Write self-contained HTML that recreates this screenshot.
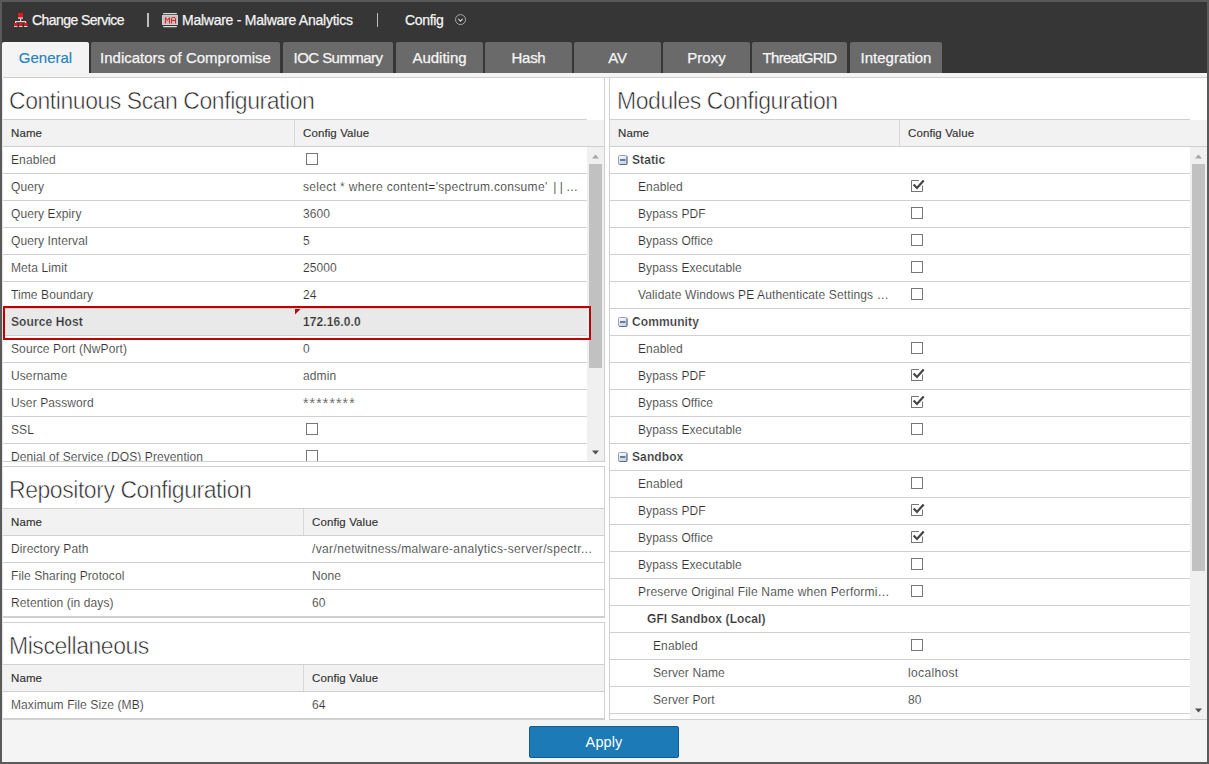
<!DOCTYPE html>
<html><head><meta charset="utf-8"><style>
html,body{margin:0;padding:0;}
body{width:1209px;height:764px;position:relative;overflow:hidden;background:#5a5a5a;font-family:"Liberation Sans",sans-serif;color:#333;}
div{position:absolute;box-sizing:border-box;}
.t{white-space:nowrap;font-size:12px;letter-spacing:0.1px;}
.n{-webkit-text-stroke:0.15px #fff;}
.bd{font-weight:bold;-webkit-text-stroke:0.2px #fff;}
svg{display:block;}
</style></head><body>
<div style="left:2px;top:2px;width:1205px;height:760px;background:#fff"></div>
<div style="left:2px;top:2px;width:1205px;height:71px;background:#363636"></div>
<div style="left:13px;top:12px;width:16px;height:16px"><svg width="16" height="16" viewBox="0 0 16 16"><rect x="5" y="1" width="5" height="5" fill="#e8141c"/><rect x="5" y="5.5" width="5" height="1.2" fill="#e0e0e0"/><rect x="7" y="6.5" width="1.2" height="3" fill="#d8d8d8"/><rect x="2" y="9" width="11" height="1.2" fill="#d8d8d8"/><rect x="2" y="9" width="1.2" height="2" fill="#d8d8d8"/><rect x="12" y="9" width="1.2" height="2" fill="#d8d8d8"/><rect x="1" y="11" width="3.5" height="3" fill="#e8141c"/><rect x="6" y="11" width="3.5" height="3" fill="#e8141c"/><rect x="11" y="11" width="3.5" height="3" fill="#e8141c"/><rect x="1" y="14" width="3.5" height="1" fill="#cfcfcf"/><rect x="6" y="14" width="3.5" height="1" fill="#cfcfcf"/><rect x="11" y="14" width="3.5" height="1" fill="#cfcfcf"/></svg></div>
<div class="t " style="left:32px;top:10px;height:21px;line-height:21px;font-size:14px;letter-spacing:-0.55px;color:#f4f4f4;-webkit-text-stroke:0.25px #f4f4f4;">Change Service</div>
<div style="left:147px;top:13px;width:2px;height:14px;background:#bdbdbd"></div>
<div style="left:161px;top:12px;width:18px;height:16px"><svg width="18" height="16" viewBox="0 0 18 16"><rect x="2" y="1" width="14" height="1.2" rx="0.6" fill="#dcdcdc"/><rect x="1" y="3" width="16" height="10" fill="#cfcfcf"/><rect x="2" y="4" width="14" height="8" fill="#c0c0c0"/><path d="M4.5 11.5 V5.5 M4.5 5.5 L6.5 8.5 L8.5 5.5 M8.5 5.5 V11.5 M10.5 11.5 V6.5 Q10.5 5.5 12.5 5.5 Q14.5 5.5 14.5 6.5 V11.5 M10.5 8.5 H14.5" fill="none" stroke="#ee1a22" stroke-width="1"/><rect x="2" y="14" width="14" height="1.2" rx="0.6" fill="#dcdcdc"/></svg></div>
<div class="t " style="left:182px;top:10px;height:21px;line-height:21px;font-size:14px;letter-spacing:-0.25px;color:#f4f4f4;-webkit-text-stroke:0.25px #f4f4f4;">Malware - Malware Analytics</div>
<div style="left:376.5px;top:13px;width:1.5px;height:14px;background:#bdbdbd"></div>
<div class="t " style="left:405px;top:10px;height:21px;line-height:21px;font-size:14px;letter-spacing:-0.35px;color:#f4f4f4;-webkit-text-stroke:0.25px #f4f4f4;">Config</div>
<div style="left:454px;top:13px;width:13px;height:13px"><svg width="13" height="13" viewBox="0 0 13 13"><circle cx="6.5" cy="6.6" r="5" fill="none" stroke="#a8a8a8" stroke-width="1"/><path d="M4.3 5.9 L6.5 8.1 L8.7 5.9" fill="none" stroke="#d4d4d4" stroke-width="1.1"/></svg></div>
<div style="left:2px;top:42px;width:87px;height:35px;background:#f4f4f4;border-radius:2px 2px 0 0"></div>
<div class="t" style="left:2px;top:42px;width:87px;height:31px;line-height:31px;text-align:center;font-size:15px;letter-spacing:0px;color:#1d82bd;-webkit-text-stroke:0.15px #1d82bd">General</div>
<div style="left:91px;top:42px;width:189px;height:31px;background:#6a6a6a;border-radius:2px 2px 0 0"></div>
<div class="t" style="left:91px;top:42px;width:189px;height:31px;line-height:31px;text-align:center;font-size:15px;letter-spacing:0px;color:#f6f6f6;-webkit-text-stroke:0.25px #f6f6f6">Indicators of Compromise</div>
<div style="left:283px;top:42px;width:110px;height:31px;background:#6a6a6a;border-radius:2px 2px 0 0"></div>
<div class="t" style="left:283px;top:42px;width:110px;height:31px;line-height:31px;text-align:center;font-size:15px;letter-spacing:-0.55px;color:#f6f6f6;-webkit-text-stroke:0.25px #f6f6f6">IOC Summary</div>
<div style="left:396px;top:42px;width:87px;height:31px;background:#6a6a6a;border-radius:2px 2px 0 0"></div>
<div class="t" style="left:396px;top:42px;width:87px;height:31px;line-height:31px;text-align:center;font-size:15px;letter-spacing:0px;color:#f6f6f6;-webkit-text-stroke:0.25px #f6f6f6">Auditing</div>
<div style="left:485px;top:42px;width:87px;height:31px;background:#6a6a6a;border-radius:2px 2px 0 0"></div>
<div class="t" style="left:485px;top:42px;width:87px;height:31px;line-height:31px;text-align:center;font-size:15px;letter-spacing:-0.3px;color:#f6f6f6;-webkit-text-stroke:0.25px #f6f6f6">Hash</div>
<div style="left:574px;top:42px;width:87px;height:31px;background:#6a6a6a;border-radius:2px 2px 0 0"></div>
<div class="t" style="left:574px;top:42px;width:87px;height:31px;line-height:31px;text-align:center;font-size:15px;letter-spacing:-0.3px;color:#f6f6f6;-webkit-text-stroke:0.25px #f6f6f6">AV</div>
<div style="left:663px;top:42px;width:87px;height:31px;background:#6a6a6a;border-radius:2px 2px 0 0"></div>
<div class="t" style="left:663px;top:42px;width:87px;height:31px;line-height:31px;text-align:center;font-size:15px;letter-spacing:0px;color:#f6f6f6;-webkit-text-stroke:0.25px #f6f6f6">Proxy</div>
<div style="left:752px;top:42px;width:95px;height:31px;background:#6a6a6a;border-radius:2px 2px 0 0"></div>
<div class="t" style="left:752px;top:42px;width:95px;height:31px;line-height:31px;text-align:center;font-size:15px;letter-spacing:-0.7px;color:#f6f6f6;-webkit-text-stroke:0.25px #f6f6f6">ThreatGRID</div>
<div style="left:850px;top:42px;width:92px;height:31px;background:#6a6a6a;border-radius:2px 2px 0 0"></div>
<div class="t" style="left:850px;top:42px;width:92px;height:31px;line-height:31px;text-align:center;font-size:15px;letter-spacing:0px;color:#f6f6f6;-webkit-text-stroke:0.25px #f6f6f6">Integration</div>
<div style="left:2px;top:73px;width:1205px;height:4px;background:#f4f4f4"></div>
<div style="left:3px;top:77px;width:1204px;height:1px;background:#cfcfcf"></div>
<div style="left:2px;top:78px;width:1px;height:684px;background:#e6e6e6"></div>
<div style="left:604px;top:78px;width:1px;height:384px;background:#d0d0d0"></div>
<div class="t " style="left:9px;top:87px;height:28px;line-height:28px;font-size:23px;letter-spacing:-0.45px;color:#262626;-webkit-text-stroke:0.55px #fff;">Continuous Scan Configuration</div>
<div style="left:3px;top:119px;width:584px;height:1px;background:#d0d0d0"></div>
<div style="left:3px;top:120px;width:601px;height:26px;background:#f2f2f2"></div>
<div style="left:3px;top:146px;width:601px;height:1px;background:#d0d0d0"></div>
<div style="left:294px;top:120px;width:1px;height:26px;background:#d8d8d8"></div>
<div class="t " style="left:11px;top:120px;height:26px;line-height:26px;font-size:11.5px;letter-spacing:0.1px;color:#333;-webkit-text-stroke:0.15px #333;">Name</div>
<div class="t " style="left:303px;top:120px;height:26px;line-height:26px;font-size:11.5px;letter-spacing:0.1px;color:#333;-webkit-text-stroke:0.15px #333;">Config Value</div>
<div style="left:3px;top:147px;width:584px;height:314px;overflow:hidden">
<div style="left:0px;top:26px;width:584px;height:1px;background:#d0d0d0"></div>
<div class="t n" style="left:8px;top:0px;height:26px;line-height:26px;">Enabled</div>
<div style="left:303px;top:6px;width:16px;height:14px"><svg width="14" height="14" viewBox="0 0 14 14"><rect x="0.5" y="0.5" width="11" height="11" fill="#fff" stroke="#777" stroke-width="1"/></svg></div>
<div style="left:0px;top:53px;width:584px;height:1px;background:#d0d0d0"></div>
<div class="t n" style="left:8px;top:27px;height:26px;line-height:26px;">Query</div>
<div class="t n" style="left:300px;top:27px;height:26px;line-height:26px;letter-spacing:0.33px;">select * where content=&#39;spectrum.consume&#39;<span style='letter-spacing:2.3px'> </span><span style='letter-spacing:3.4px'>|</span>|<span style='letter-spacing:-0.5px'> </span>&#8230;</div>
<div style="left:0px;top:80px;width:584px;height:1px;background:#d0d0d0"></div>
<div class="t n" style="left:8px;top:54px;height:26px;line-height:26px;">Query Expiry</div>
<div class="t n" style="left:300px;top:54px;height:26px;line-height:26px;">3600</div>
<div style="left:0px;top:107px;width:584px;height:1px;background:#d0d0d0"></div>
<div class="t n" style="left:8px;top:81px;height:26px;line-height:26px;">Query Interval</div>
<div class="t n" style="left:300px;top:81px;height:26px;line-height:26px;">5</div>
<div style="left:0px;top:134px;width:584px;height:1px;background:#d0d0d0"></div>
<div class="t n" style="left:8px;top:108px;height:26px;line-height:26px;">Meta Limit</div>
<div class="t n" style="left:300px;top:108px;height:26px;line-height:26px;">25000</div>
<div style="left:0px;top:161px;width:584px;height:1px;background:#d0d0d0"></div>
<div class="t n" style="left:8px;top:135px;height:26px;line-height:26px;">Time Boundary</div>
<div class="t n" style="left:300px;top:135px;height:26px;line-height:26px;">24</div>
<div style="left:0px;top:162px;width:584px;height:26px;background:#e9e9e9"></div>
<div style="left:0px;top:188px;width:584px;height:1px;background:#d0d0d0"></div>
<div class="t " style="left:8px;top:162px;height:26px;line-height:26px;font-weight:bold;-webkit-text-stroke:0.2px #e9e9e9;">Source Host</div>
<div class="t " style="left:300px;top:162px;height:26px;line-height:26px;font-weight:bold;-webkit-text-stroke:0.2px #e9e9e9;">172.16.0.0</div>
<div style="left:0px;top:215px;width:584px;height:1px;background:#d0d0d0"></div>
<div class="t n" style="left:8px;top:189px;height:26px;line-height:26px;">Source Port (NwPort)</div>
<div class="t n" style="left:300px;top:189px;height:26px;line-height:26px;">0</div>
<div style="left:0px;top:242px;width:584px;height:1px;background:#d0d0d0"></div>
<div class="t n" style="left:8px;top:216px;height:26px;line-height:26px;">Username</div>
<div class="t n" style="left:300px;top:216px;height:26px;line-height:26px;">admin</div>
<div style="left:0px;top:269px;width:584px;height:1px;background:#d0d0d0"></div>
<div class="t n" style="left:8px;top:243px;height:26px;line-height:26px;">User Password</div>
<div class="t n" style="left:300px;top:243px;height:26px;line-height:26px;font-size:14px;letter-spacing:1.15px;">********</div>
<div style="left:0px;top:296px;width:584px;height:1px;background:#d0d0d0"></div>
<div class="t n" style="left:8px;top:270px;height:26px;line-height:26px;">SSL</div>
<div style="left:303px;top:276px;width:16px;height:14px"><svg width="14" height="14" viewBox="0 0 14 14"><rect x="0.5" y="0.5" width="11" height="11" fill="#fff" stroke="#777" stroke-width="1"/></svg></div>
<div style="left:0px;top:323px;width:584px;height:1px;background:#d0d0d0"></div>
<div class="t n" style="left:8px;top:297px;height:26px;line-height:26px;">Denial of Service (DOS) Prevention</div>
<div style="left:303px;top:303px;width:16px;height:14px"><svg width="14" height="14" viewBox="0 0 14 14"><rect x="0.5" y="0.5" width="11" height="11" fill="#fff" stroke="#777" stroke-width="1"/></svg></div>
</div>
<div style="left:3px;top:461px;width:602px;height:1px;background:#d0d0d0"></div>
<div style="left:587px;top:147px;width:17px;height:314px;background:#f0f0f0"></div>
<div style="left:589px;top:164px;width:13px;height:204px;background:#c1c1c1"></div>
<div style="left:592px;top:154px;width:8px;height:5px"><svg width="8" height="5" viewBox="0 0 8 5"><path d="M0 4.5 L3.5 0.5 L7 4.5Z" fill="#a6a6a6"/></svg></div>
<div style="left:592px;top:450px;width:8px;height:5px"><svg width="8" height="5" viewBox="0 0 8 5"><path d="M0 0.5 L7 0.5 L3.5 4.5Z" fill="#505050"/></svg></div>
<div style="left:3px;top:466px;width:602px;height:1px;background:#d0d0d0"></div>
<div style="left:604px;top:466px;width:1px;height:152px;background:#d0d0d0"></div>
<div class="t " style="left:9px;top:476px;height:28px;line-height:28px;font-size:23px;letter-spacing:-0.45px;color:#262626;-webkit-text-stroke:0.55px #fff;">Repository Configuration</div>
<div style="left:3px;top:508px;width:601px;height:1px;background:#d0d0d0"></div>
<div style="left:3px;top:509px;width:601px;height:26px;background:#f2f2f2"></div>
<div style="left:3px;top:535px;width:601px;height:1px;background:#d0d0d0"></div>
<div style="left:303px;top:509px;width:1px;height:26px;background:#d8d8d8"></div>
<div class="t " style="left:11px;top:509px;height:26px;line-height:26px;font-size:11.5px;letter-spacing:0.1px;color:#333;-webkit-text-stroke:0.15px #333;">Name</div>
<div class="t " style="left:312px;top:509px;height:26px;line-height:26px;font-size:11.5px;letter-spacing:0.1px;color:#333;-webkit-text-stroke:0.15px #333;">Config Value</div>
<div style="left:3px;top:562px;width:601px;height:1px;background:#d0d0d0"></div>
<div class="t n" style="left:11px;top:536px;height:26px;line-height:26px;">Directory Path</div>
<div class="t n" style="left:312px;top:536px;height:26px;line-height:26px;letter-spacing:0.36px;">/var/netwitness/malware-analytics-server/spectr...</div>
<div style="left:3px;top:589px;width:601px;height:1px;background:#d0d0d0"></div>
<div class="t n" style="left:11px;top:563px;height:26px;line-height:26px;">File Sharing Protocol</div>
<div class="t n" style="left:312px;top:563px;height:26px;line-height:26px;">None</div>
<div class="t n" style="left:11px;top:590px;height:26px;line-height:26px;">Retention (in days)</div>
<div class="t n" style="left:312px;top:590px;height:26px;line-height:26px;">60</div>
<div style="left:3px;top:616px;width:602px;height:2px;background:#d0d0d0"></div>
<div style="left:3px;top:622px;width:602px;height:1px;background:#d0d0d0"></div>
<div style="left:604px;top:622px;width:1px;height:98px;background:#d0d0d0"></div>
<div class="t " style="left:9px;top:632px;height:28px;line-height:28px;font-size:23px;letter-spacing:-0.45px;color:#262626;-webkit-text-stroke:0.55px #fff;">Miscellaneous</div>
<div style="left:3px;top:664px;width:601px;height:1px;background:#d0d0d0"></div>
<div style="left:3px;top:665px;width:601px;height:26px;background:#f2f2f2"></div>
<div style="left:3px;top:691px;width:601px;height:1px;background:#d0d0d0"></div>
<div style="left:303px;top:665px;width:1px;height:26px;background:#d8d8d8"></div>
<div class="t " style="left:11px;top:665px;height:26px;line-height:26px;font-size:11.5px;letter-spacing:0.1px;color:#333;-webkit-text-stroke:0.15px #333;">Name</div>
<div class="t " style="left:312px;top:665px;height:26px;line-height:26px;font-size:11.5px;letter-spacing:0.1px;color:#333;-webkit-text-stroke:0.15px #333;">Config Value</div>
<div class="t n" style="left:11px;top:692px;height:26px;line-height:26px;">Maximum File Size (MB)</div>
<div class="t n" style="left:312px;top:692px;height:26px;line-height:26px;">64</div>
<div style="left:609px;top:78px;width:1px;height:642px;background:#d0d0d0"></div>
<div class="t " style="left:617px;top:87px;height:28px;line-height:28px;font-size:23px;letter-spacing:-0.45px;color:#262626;-webkit-text-stroke:0.55px #fff;">Modules Configuration</div>
<div style="left:610px;top:119px;width:580px;height:1px;background:#d0d0d0"></div>
<div style="left:610px;top:120px;width:597px;height:26px;background:#f2f2f2"></div>
<div style="left:610px;top:146px;width:597px;height:1px;background:#d0d0d0"></div>
<div style="left:899px;top:120px;width:1px;height:26px;background:#d8d8d8"></div>
<div class="t " style="left:618px;top:120px;height:26px;line-height:26px;font-size:11.5px;letter-spacing:0.1px;color:#333;-webkit-text-stroke:0.15px #333;">Name</div>
<div class="t " style="left:908px;top:120px;height:26px;line-height:26px;font-size:11.5px;letter-spacing:0.1px;color:#333;-webkit-text-stroke:0.15px #333;">Config Value</div>
<div style="left:610px;top:147px;width:580px;height:572px;overflow:hidden">
<div style="left:0px;top:26px;width:580px;height:1px;background:#d0d0d0"></div>
<div style="left:8px;top:8px;width:10px;height:10px"><svg width="10" height="10" viewBox="0 0 10 10"><defs><linearGradient id="cg" x1="0" y1="0" x2="0.4" y2="1"><stop offset="0" stop-color="#ffffff"/><stop offset="1" stop-color="#c8d3e6"/></linearGradient></defs><rect x="0.5" y="0.5" width="8.5" height="9" rx="1.3" fill="url(#cg)" stroke="#93a1bb" stroke-width="1"/><path d="M9 1.5 V8.5 Q9 9.5 8 9.5 H1.5" fill="none" stroke="#5d6c88" stroke-width="1"/><rect x="2" y="4" width="5.5" height="2" fill="#6c7b96"/></svg></div>
<div class="t bd" style="left:22px;top:0px;height:26px;line-height:26px;">Static</div>
<div style="left:0px;top:53px;width:580px;height:1px;background:#d0d0d0"></div>
<div class="t n" style="left:28px;top:27px;height:26px;line-height:26px;">Enabled</div>
<div style="left:301px;top:33px;width:16px;height:14px"><svg width="16" height="14" viewBox="0 0 16 14"><path d="M0.5 12 V0.5 H8 M11.5 5.5 V11.5 H0.5" fill="none" stroke="#777" stroke-width="1"/><path d="M2.6 4.4 L6 7.9 L12.7 0.4" fill="none" stroke="#454545" stroke-width="2.2"/></svg></div>
<div style="left:0px;top:80px;width:580px;height:1px;background:#d0d0d0"></div>
<div class="t n" style="left:28px;top:54px;height:26px;line-height:26px;">Bypass PDF</div>
<div style="left:301px;top:60px;width:16px;height:14px"><svg width="14" height="14" viewBox="0 0 14 14"><rect x="0.5" y="0.5" width="11" height="11" fill="#fff" stroke="#777" stroke-width="1"/></svg></div>
<div style="left:0px;top:107px;width:580px;height:1px;background:#d0d0d0"></div>
<div class="t n" style="left:28px;top:81px;height:26px;line-height:26px;">Bypass Office</div>
<div style="left:301px;top:87px;width:16px;height:14px"><svg width="14" height="14" viewBox="0 0 14 14"><rect x="0.5" y="0.5" width="11" height="11" fill="#fff" stroke="#777" stroke-width="1"/></svg></div>
<div style="left:0px;top:134px;width:580px;height:1px;background:#d0d0d0"></div>
<div class="t n" style="left:28px;top:108px;height:26px;line-height:26px;">Bypass Executable</div>
<div style="left:301px;top:114px;width:16px;height:14px"><svg width="14" height="14" viewBox="0 0 14 14"><rect x="0.5" y="0.5" width="11" height="11" fill="#fff" stroke="#777" stroke-width="1"/></svg></div>
<div style="left:0px;top:161px;width:580px;height:1px;background:#d0d0d0"></div>
<div class="t n" style="left:28px;top:135px;height:26px;line-height:26px;letter-spacing:0.13px;">Validate Windows PE Authenticate Settings &#8230;</div>
<div style="left:301px;top:141px;width:16px;height:14px"><svg width="14" height="14" viewBox="0 0 14 14"><rect x="0.5" y="0.5" width="11" height="11" fill="#fff" stroke="#777" stroke-width="1"/></svg></div>
<div style="left:0px;top:188px;width:580px;height:1px;background:#d0d0d0"></div>
<div style="left:8px;top:170px;width:10px;height:10px"><svg width="10" height="10" viewBox="0 0 10 10"><defs><linearGradient id="cg" x1="0" y1="0" x2="0.4" y2="1"><stop offset="0" stop-color="#ffffff"/><stop offset="1" stop-color="#c8d3e6"/></linearGradient></defs><rect x="0.5" y="0.5" width="8.5" height="9" rx="1.3" fill="url(#cg)" stroke="#93a1bb" stroke-width="1"/><path d="M9 1.5 V8.5 Q9 9.5 8 9.5 H1.5" fill="none" stroke="#5d6c88" stroke-width="1"/><rect x="2" y="4" width="5.5" height="2" fill="#6c7b96"/></svg></div>
<div class="t bd" style="left:22px;top:162px;height:26px;line-height:26px;">Community</div>
<div style="left:0px;top:215px;width:580px;height:1px;background:#d0d0d0"></div>
<div class="t n" style="left:28px;top:189px;height:26px;line-height:26px;">Enabled</div>
<div style="left:301px;top:195px;width:16px;height:14px"><svg width="14" height="14" viewBox="0 0 14 14"><rect x="0.5" y="0.5" width="11" height="11" fill="#fff" stroke="#777" stroke-width="1"/></svg></div>
<div style="left:0px;top:242px;width:580px;height:1px;background:#d0d0d0"></div>
<div class="t n" style="left:28px;top:216px;height:26px;line-height:26px;">Bypass PDF</div>
<div style="left:301px;top:222px;width:16px;height:14px"><svg width="16" height="14" viewBox="0 0 16 14"><path d="M0.5 12 V0.5 H8 M11.5 5.5 V11.5 H0.5" fill="none" stroke="#777" stroke-width="1"/><path d="M2.6 4.4 L6 7.9 L12.7 0.4" fill="none" stroke="#454545" stroke-width="2.2"/></svg></div>
<div style="left:0px;top:269px;width:580px;height:1px;background:#d0d0d0"></div>
<div class="t n" style="left:28px;top:243px;height:26px;line-height:26px;">Bypass Office</div>
<div style="left:301px;top:249px;width:16px;height:14px"><svg width="16" height="14" viewBox="0 0 16 14"><path d="M0.5 12 V0.5 H8 M11.5 5.5 V11.5 H0.5" fill="none" stroke="#777" stroke-width="1"/><path d="M2.6 4.4 L6 7.9 L12.7 0.4" fill="none" stroke="#454545" stroke-width="2.2"/></svg></div>
<div style="left:0px;top:296px;width:580px;height:1px;background:#d0d0d0"></div>
<div class="t n" style="left:28px;top:270px;height:26px;line-height:26px;">Bypass Executable</div>
<div style="left:301px;top:276px;width:16px;height:14px"><svg width="14" height="14" viewBox="0 0 14 14"><rect x="0.5" y="0.5" width="11" height="11" fill="#fff" stroke="#777" stroke-width="1"/></svg></div>
<div style="left:0px;top:323px;width:580px;height:1px;background:#d0d0d0"></div>
<div style="left:8px;top:305px;width:10px;height:10px"><svg width="10" height="10" viewBox="0 0 10 10"><defs><linearGradient id="cg" x1="0" y1="0" x2="0.4" y2="1"><stop offset="0" stop-color="#ffffff"/><stop offset="1" stop-color="#c8d3e6"/></linearGradient></defs><rect x="0.5" y="0.5" width="8.5" height="9" rx="1.3" fill="url(#cg)" stroke="#93a1bb" stroke-width="1"/><path d="M9 1.5 V8.5 Q9 9.5 8 9.5 H1.5" fill="none" stroke="#5d6c88" stroke-width="1"/><rect x="2" y="4" width="5.5" height="2" fill="#6c7b96"/></svg></div>
<div class="t bd" style="left:22px;top:297px;height:26px;line-height:26px;">Sandbox</div>
<div style="left:0px;top:350px;width:580px;height:1px;background:#d0d0d0"></div>
<div class="t n" style="left:28px;top:324px;height:26px;line-height:26px;">Enabled</div>
<div style="left:301px;top:330px;width:16px;height:14px"><svg width="14" height="14" viewBox="0 0 14 14"><rect x="0.5" y="0.5" width="11" height="11" fill="#fff" stroke="#777" stroke-width="1"/></svg></div>
<div style="left:0px;top:377px;width:580px;height:1px;background:#d0d0d0"></div>
<div class="t n" style="left:28px;top:351px;height:26px;line-height:26px;">Bypass PDF</div>
<div style="left:301px;top:357px;width:16px;height:14px"><svg width="16" height="14" viewBox="0 0 16 14"><path d="M0.5 12 V0.5 H8 M11.5 5.5 V11.5 H0.5" fill="none" stroke="#777" stroke-width="1"/><path d="M2.6 4.4 L6 7.9 L12.7 0.4" fill="none" stroke="#454545" stroke-width="2.2"/></svg></div>
<div style="left:0px;top:404px;width:580px;height:1px;background:#d0d0d0"></div>
<div class="t n" style="left:28px;top:378px;height:26px;line-height:26px;">Bypass Office</div>
<div style="left:301px;top:384px;width:16px;height:14px"><svg width="16" height="14" viewBox="0 0 16 14"><path d="M0.5 12 V0.5 H8 M11.5 5.5 V11.5 H0.5" fill="none" stroke="#777" stroke-width="1"/><path d="M2.6 4.4 L6 7.9 L12.7 0.4" fill="none" stroke="#454545" stroke-width="2.2"/></svg></div>
<div style="left:0px;top:431px;width:580px;height:1px;background:#d0d0d0"></div>
<div class="t n" style="left:28px;top:405px;height:26px;line-height:26px;">Bypass Executable</div>
<div style="left:301px;top:411px;width:16px;height:14px"><svg width="14" height="14" viewBox="0 0 14 14"><rect x="0.5" y="0.5" width="11" height="11" fill="#fff" stroke="#777" stroke-width="1"/></svg></div>
<div style="left:0px;top:458px;width:580px;height:1px;background:#d0d0d0"></div>
<div class="t n" style="left:28px;top:432px;height:26px;line-height:26px;letter-spacing:0.2px;">Preserve Original File Name when Performi&#8230;</div>
<div style="left:301px;top:438px;width:16px;height:14px"><svg width="14" height="14" viewBox="0 0 14 14"><rect x="0.5" y="0.5" width="11" height="11" fill="#fff" stroke="#777" stroke-width="1"/></svg></div>
<div style="left:0px;top:485px;width:580px;height:1px;background:#d0d0d0"></div>
<div class="t bd" style="left:37px;top:459px;height:26px;line-height:26px;">GFI Sandbox (Local)</div>
<div style="left:0px;top:512px;width:580px;height:1px;background:#d0d0d0"></div>
<div class="t n" style="left:43px;top:486px;height:26px;line-height:26px;">Enabled</div>
<div style="left:301px;top:492px;width:16px;height:14px"><svg width="14" height="14" viewBox="0 0 14 14"><rect x="0.5" y="0.5" width="11" height="11" fill="#fff" stroke="#777" stroke-width="1"/></svg></div>
<div style="left:0px;top:539px;width:580px;height:1px;background:#d0d0d0"></div>
<div class="t n" style="left:43px;top:513px;height:26px;line-height:26px;">Server Name</div>
<div class="t n" style="left:298px;top:513px;height:26px;line-height:26px;letter-spacing:0.35px;">localhost</div>
<div style="left:0px;top:566px;width:580px;height:1px;background:#d0d0d0"></div>
<div class="t n" style="left:43px;top:540px;height:26px;line-height:26px;">Server Port</div>
<div class="t n" style="left:298px;top:540px;height:26px;line-height:26px;">80</div>
<div style="left:0px;top:593px;width:580px;height:1px;background:#d0d0d0"></div>
<div class="t n" style="left:43px;top:567px;height:26px;line-height:26px;"></div>
</div>
<div style="left:1190px;top:147px;width:17px;height:572px;background:#f0f0f0"></div>
<div style="left:1192px;top:164px;width:13px;height:407px;background:#c1c1c1"></div>
<div style="left:1195px;top:154px;width:8px;height:5px"><svg width="8" height="5" viewBox="0 0 8 5"><path d="M0 4.5 L3.5 0.5 L7 4.5Z" fill="#a6a6a6"/></svg></div>
<div style="left:1195px;top:708px;width:8px;height:5px"><svg width="8" height="5" viewBox="0 0 8 5"><path d="M0 0.5 L7 0.5 L3.5 4.5Z" fill="#505050"/></svg></div>
<div style="left:609px;top:719px;width:598px;height:1px;background:#d0d0d0"></div>
<div style="left:3px;top:718px;width:602px;height:2px;background:#d0d0d0"></div>
<div style="left:3px;top:306px;width:588px;height:34px;border:2px solid #c00000"></div>
<div style="left:295px;top:309px;width:6px;height:6px"><svg width="6" height="6" viewBox="0 0 6 6"><path d="M0 0 H5.5 L0 5.5Z" fill="#c00000"/></svg></div>
<div style="left:3px;top:718px;width:602px;height:2px;background:#d0d0d0"></div>
<div style="left:2px;top:720px;width:1205px;height:42px;background:#f4f4f4"></div>
<div style="left:529px;top:726px;width:150px;height:32px;background:#1c7ab6;border:1px solid #0d5c94;border-radius:2px"></div>
<div class="t " style="left:529px;top:726px;height:32px;line-height:32px;width:150px;text-align:center;font-size:14.5px;color:#fff;">Apply</div>
</body></html>
